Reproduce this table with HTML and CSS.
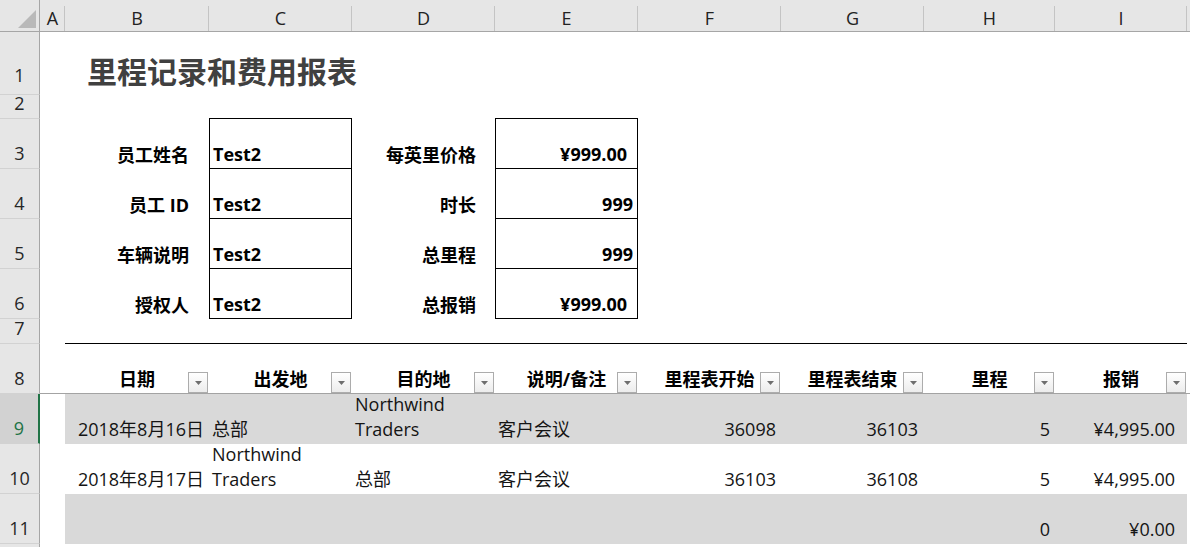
FILE: index.html
```html
<!DOCTYPE html>
<html lang="zh-CN">
<head>
<meta charset="utf-8">
<title>里程记录和费用报表</title>
<link rel="stylesheet" href="styles.css">
</head>
<body>
<div class="sheet">
  <div class="row hdr">
    <div class="corner"><svg width="39" height="31" viewBox="0 0 39 31"><polygon points="18,28 36,28 36,10" fill="#b9b9b9"/></svg></div>
    <div class="ch">A</div>
    <div class="ch">B</div>
    <div class="ch">C</div>
    <div class="ch">D</div>
    <div class="ch">E</div>
    <div class="ch">F</div>
    <div class="ch">G</div>
    <div class="ch">H</div>
    <div class="ch">I</div>
    <div class="ch last"></div>
  </div>

  <div class="row r1">
    <div class="rh rh1">1</div>
    <div class="c"></div>
    <div class="c title">里程记录和费用报表</div>
  </div>

  <div class="row r2">
    <div class="rh">2</div>
    <div class="c"></div>
    <div class="c"></div>
    <div class="c boxtop"></div>
    <div class="c"></div>
    <div class="c boxtop"></div>
  </div>

  <div class="row r50">
    <div class="rh">3</div>
    <div class="c"></div>
    <div class="c lbl">员工姓名</div>
    <div class="c box val">Test2</div>
    <div class="c lbl lbl2">每英里价格</div>
    <div class="c box num cur">¥999.00</div>
  </div>

  <div class="row r50">
    <div class="rh">4</div>
    <div class="c"></div>
    <div class="c lbl">员工 ID</div>
    <div class="c box val">Test2</div>
    <div class="c lbl lbl2">时长</div>
    <div class="c box num">999</div>
  </div>

  <div class="row r50">
    <div class="rh">5</div>
    <div class="c"></div>
    <div class="c lbl">车辆说明</div>
    <div class="c box val">Test2</div>
    <div class="c lbl lbl2">总里程</div>
    <div class="c box num">999</div>
  </div>

  <div class="row r50">
    <div class="rh">6</div>
    <div class="c"></div>
    <div class="c lbl">授权人</div>
    <div class="c box val">Test2</div>
    <div class="c lbl lbl2">总报销</div>
    <div class="c box num cur">¥999.00</div>
  </div>

  <div class="row r7">
    <div class="rh">7</div>
    <div class="c"></div>
    <div class="c rule"></div>
  </div>

  <div class="row r50 thead">
    <div class="rh">8</div>
    <div class="c tb"></div>
    <div class="c th">日期<span class="dd"><svg width="7" height="4" viewBox="0 0 7 4"><polygon points="0,0 7,0 3.5,4" fill="#6e6e6e"/></svg></span></div>
    <div class="c th">出发地<span class="dd"><svg width="7" height="4" viewBox="0 0 7 4"><polygon points="0,0 7,0 3.5,4" fill="#6e6e6e"/></svg></span></div>
    <div class="c th">目的地<span class="dd"><svg width="7" height="4" viewBox="0 0 7 4"><polygon points="0,0 7,0 3.5,4" fill="#6e6e6e"/></svg></span></div>
    <div class="c th">说明/备注<span class="dd"><svg width="7" height="4" viewBox="0 0 7 4"><polygon points="0,0 7,0 3.5,4" fill="#6e6e6e"/></svg></span></div>
    <div class="c th">里程表开始<span class="dd"><svg width="7" height="4" viewBox="0 0 7 4"><polygon points="0,0 7,0 3.5,4" fill="#6e6e6e"/></svg></span></div>
    <div class="c th">里程表结束<span class="dd"><svg width="7" height="4" viewBox="0 0 7 4"><polygon points="0,0 7,0 3.5,4" fill="#6e6e6e"/></svg></span></div>
    <div class="c th">里程<span class="dd"><svg width="7" height="4" viewBox="0 0 7 4"><polygon points="0,0 7,0 3.5,4" fill="#6e6e6e"/></svg></span></div>
    <div class="c th">报销<span class="dd"><svg width="7" height="4" viewBox="0 0 7 4"><polygon points="0,0 7,0 3.5,4" fill="#6e6e6e"/></svg></span></div>
    <div class="c tb"></div>
  </div>

  <div class="row r50">
    <div class="rh sel">9</div>
    <div class="c"></div>
    <div class="c band date">2018年8月16日</div>
    <div class="c band">总部</div>
    <div class="c band">Northwind Traders</div>
    <div class="c band">客户会议</div>
    <div class="c band dr">36098</div>
    <div class="c band dr g">36103</div>
    <div class="c band dr">5</div>
    <div class="c band dr cur2">¥4,995.00</div>
  </div>

  <div class="row r50">
    <div class="rh">10</div>
    <div class="c"></div>
    <div class="c date">2018年8月17日</div>
    <div class="c">Northwind Traders</div>
    <div class="c">总部</div>
    <div class="c">客户会议</div>
    <div class="c dr">36103</div>
    <div class="c dr g">36108</div>
    <div class="c dr">5</div>
    <div class="c dr cur2">¥4,995.00</div>
  </div>

  <div class="row r50">
    <div class="rh">11</div>
    <div class="c"></div>
    <div class="c band"></div>
    <div class="c band"></div>
    <div class="c band"></div>
    <div class="c band"></div>
    <div class="c band"></div>
    <div class="c band"></div>
    <div class="c band dr">0</div>
    <div class="c band dr cur2">¥0.00</div>
  </div>

  <div class="row r4">
    <div class="rh"></div>
  </div>
</div>
</body>
</html>
```

FILE: styles.css
```css
* {
  box-sizing: border-box;
  margin: 0;
  padding: 0;
}

html, body {
  overflow: hidden;
  background: #ffffff;
}

body {
  width: 1190px;
  height: 547px;
  font-family: "Open Sans", "Noto Sans CJK SC", sans-serif;
  font-size: 18px;
  color: #141414;
}

.row {
  display: grid;
  grid-template-columns: 40px 25px 144px 143px 143px 143px 143px 143px 131px 132px 1fr;
  grid-template-rows: 100%;
}

/* column header */
.hdr {
  height: 32px;
  background: #e6e6e6;
  border-bottom: 1px solid #a6a6a6;
}

.corner {
  border-right: 1px solid #a6a6a6;
}

.corner svg {
  display: block;
}

.ch {
  position: relative;
  display: flex;
  align-items: center;
  justify-content: center;
  padding-top: 4px;
  font-size: 18px;
  color: #222222;
}

.ch::after {
  content: "";
  position: absolute;
  right: 0;
  top: 6px;
  bottom: 0;
  width: 1px;
  background: #c4c4c4;
}

.ch.last::after {
  display: none;
}

/* row heights */
.r1 { height: 63px; }
.r2 { height: 24px; }
.r7 { height: 25px; }
.r50 { height: 50px; }
.r4 { height: 4px; }

/* row header */
.rh {
  display: flex;
  align-items: flex-end;
  justify-content: center;
  line-height: 25px;
  padding-bottom: 2px;
  background: #e6e6e6;
  border-right: 1px solid #a6a6a6;
  border-bottom: 1px solid #d2d2d2;
  font-size: 18px;
  color: #262626;
}

.r4 .rh {
  border-bottom: none;
}

.rh1 {
  padding-bottom: 6px;
}

.rh.sel {
  background: #d2d2d2;
  color: #217346;
  border-right: 2px solid #217346;
}

/* cells */
.c {
  display: flex;
  align-items: flex-end;
  min-width: 0;
  min-height: 0;
  line-height: 25px;
  padding: 0 3px 2px 3px;
}

.title {
  grid-column: 3 / -1;
  font-family: "Noto Sans CJK SC", sans-serif;
  font-size: 30px;
  font-weight: 700;
  line-height: 36px;
  color: #404040;
  padding-left: 22px;
  padding-bottom: 7px;
}

.lbl {
  justify-content: flex-end;
  text-align: right;
  font-weight: 700;
  color: #000000;
  padding-right: 20px;
  padding-bottom: 1px;
}

.lbl2 {
  padding-right: 19px;
}

.boxtop {
  border-bottom: 1px solid #000000;
}

.box {
  border-left: 1px solid #000000;
  border-right: 1px solid #000000;
  border-bottom: 1px solid #000000;
}

.val {
  font-weight: 700;
  color: #000000;
  padding-left: 3px;
  padding-bottom: 1px;
}

.num {
  justify-content: flex-end;
  font-weight: 700;
  color: #000000;
  padding-right: 4px;
  padding-bottom: 1px;
}

.num.cur {
  padding-right: 10px;
}

.rule {
  grid-column: 3 / 11;
  border-bottom: 1px solid #000000;
}

/* table header */
.tb {
  border-bottom: 1px solid #a3a3a3;
}

.th {
  position: relative;
  justify-content: center;
  font-weight: 700;
  color: #000000;
  padding: 0 0 1px 0;
  border-bottom: 1px solid #a3a3a3;
}

.dd {
  position: absolute;
  right: 1px;
  bottom: 0;
  width: 20px;
  height: 21px;
  border: 1px solid #acacac;
  background: linear-gradient(#ffffff, #ececec);
  display: flex;
  align-items: center;
  justify-content: center;
}

.dd svg {
  display: block;
}

/* data */
.band {
  background: #d9d9d9;
}

.date {
  justify-content: flex-end;
  padding-right: 5px;
}

.dr {
  justify-content: flex-end;
  text-align: right;
  padding-right: 5px;
}

.dr.g {
  padding-right: 6px;
}

.dr.cur2 {
  padding-right: 12px;
}
```
